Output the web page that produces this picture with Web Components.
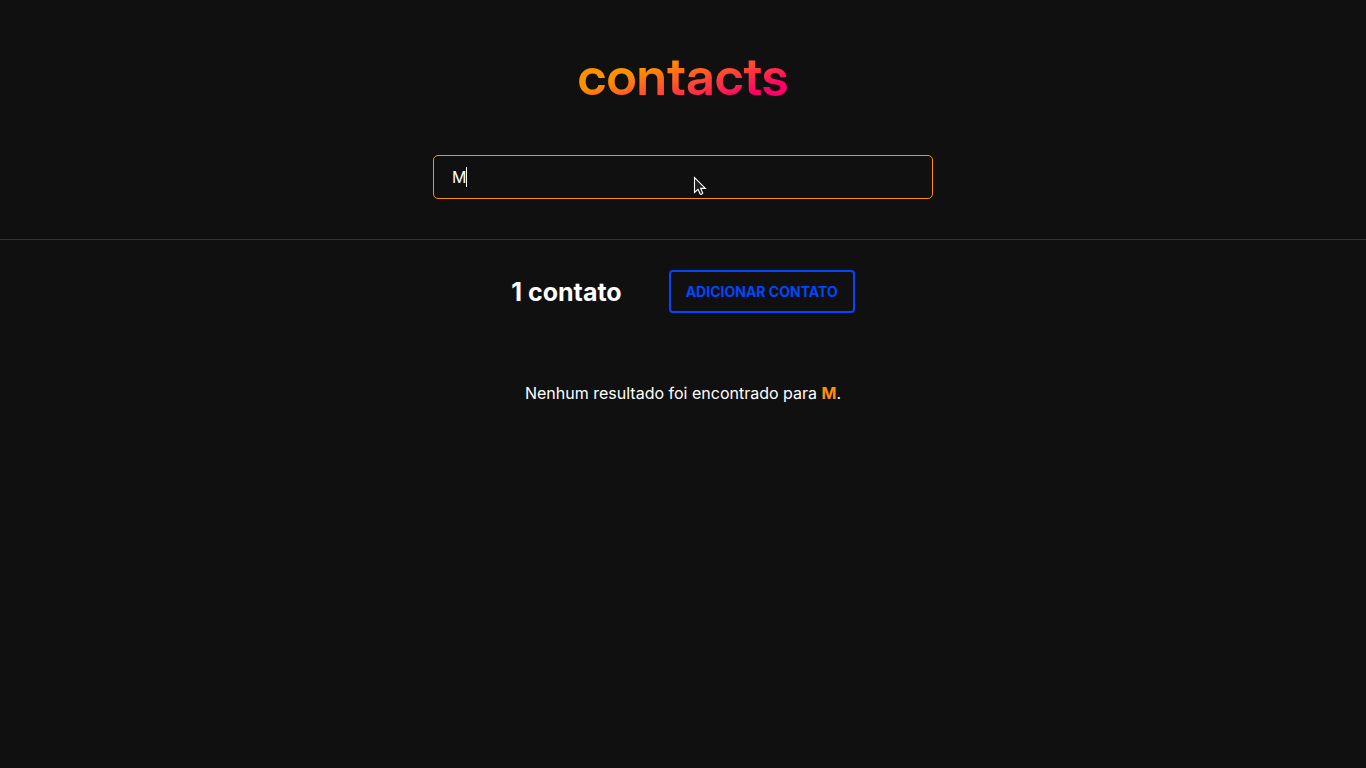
<!DOCTYPE html>
<html lang="pt-BR">
<head>
<meta charset="utf-8">
<title>contacts</title>
<style>
  body {
    margin: 0;
    min-height: 100vh;
    background: #101010;
    color: #fff;
    font: 16px/20px Inter, "Liberation Sans", sans-serif;
  }
</style>
</head>
<body>
<contacts-app></contacts-app>

<script>
  class BaseElement extends HTMLElement {
    constructor() {
      super();
      this.attachShadow({ mode: "open" }).innerHTML = this.constructor.markup;
    }
  }

  customElements.define("app-logo", class extends BaseElement {
    static markup = `
      <style>
        :host { display: block; }
        h1 {
          margin: 0;
          font-family: "Inter Display", Inter, "Liberation Sans", sans-serif;
          font-size: 53px;
          line-height: 64px;
          font-weight: 600;
          color: transparent;
          background: linear-gradient(to bottom right, #ff9100 35%, #ff0066 80%);
          -webkit-background-clip: text;
          background-clip: text;
        }
      </style>
      <h1><slot></slot></h1>`;
  });

  customElements.define("search-field", class extends BaseElement {
    static markup = `
      <style>
        :host { display: block; position: relative; width: 100%; max-width: 500px; }
        input {
          display: block;
          box-sizing: border-box;
          width: 100%;
          height: 44px;
          padding: 0 18px;
          border: 1px solid #ff9100;
          border-radius: 5px;
          outline: none;
          background: transparent;
          color: inherit;
          font: inherit;
          caret-color: transparent;
        }
        .caret {
          position: absolute;
          top: 12px;
          left: 33px;
          width: 1px;
          height: 20px;
          background: #fff;
        }
        svg { position: absolute; top: 21px; left: 52%; pointer-events: none; }
      </style>
      <input type="text" aria-label="Pesquisar contato" value="M">
      <span class="caret"></span>
      <svg width="14" height="20" viewBox="0 0 14 20" aria-hidden="true">
        <path d="M1.5 1.5V16.5L5 13.3L7.2 18.1Q8.5 18.8 9.8 17.2L7.7 12.4H12.4Z"
          fill="#222" stroke="#fff" stroke-width="1.1"/>
      </svg>`;
  });

  customElements.define("outline-button", class extends BaseElement {
    static markup = `
      <style>
        :host { display: block; }
        button {
          display: block;
          height: 43px;
          padding: 0 15px;
          border: 2px solid #0047ff;
          border-radius: 4px;
          background: transparent;
          color: #0047ff;
          font: bold 14px/17px Inter, "Liberation Sans", sans-serif;
          text-transform: uppercase;
          cursor: pointer;
        }
      </style>
      <button type="button"><slot></slot></button>`;
  });

  customElements.define("contact-toolbar", class extends BaseElement {
    static markup = `
      <style>
        :host { display: flex; justify-content: center; align-items: center; gap: 47px; }
        h2 { margin: 0; font-size: 25px; line-height: 30px; font-weight: 700; }
      </style>
      <h2><slot></slot></h2>
      <outline-button>Adicionar contato</outline-button>`;
  });

  customElements.define("empty-result", class extends BaseElement {
    static markup = `
      <style>
        :host { display: block; text-align: center; }
        p { margin: 0; }
        strong { color: #ff9100; font-weight: 700; }
      </style>
      <p>Nenhum resultado foi encontrado para <strong><slot></slot></strong>.</p>`;
  });

  customElements.define("contacts-app", class extends BaseElement {
    static markup = `
      <style>
        :host { display: block; }
        header {
          display: flex;
          flex-direction: column;
          align-items: center;
          gap: 47px;
          padding: 44px 20px 40px;
          border-bottom: 1px solid #333;
        }
        main { display: grid; gap: 70px; padding: 30px 20px; }
      </style>
      <header>
        <app-logo>contacts</app-logo>
        <search-field></search-field>
      </header>
      <main>
        <contact-toolbar>1 contato</contact-toolbar>
        <empty-result>M</empty-result>
      </main>`;
  });
</script>
</body>
</html>
